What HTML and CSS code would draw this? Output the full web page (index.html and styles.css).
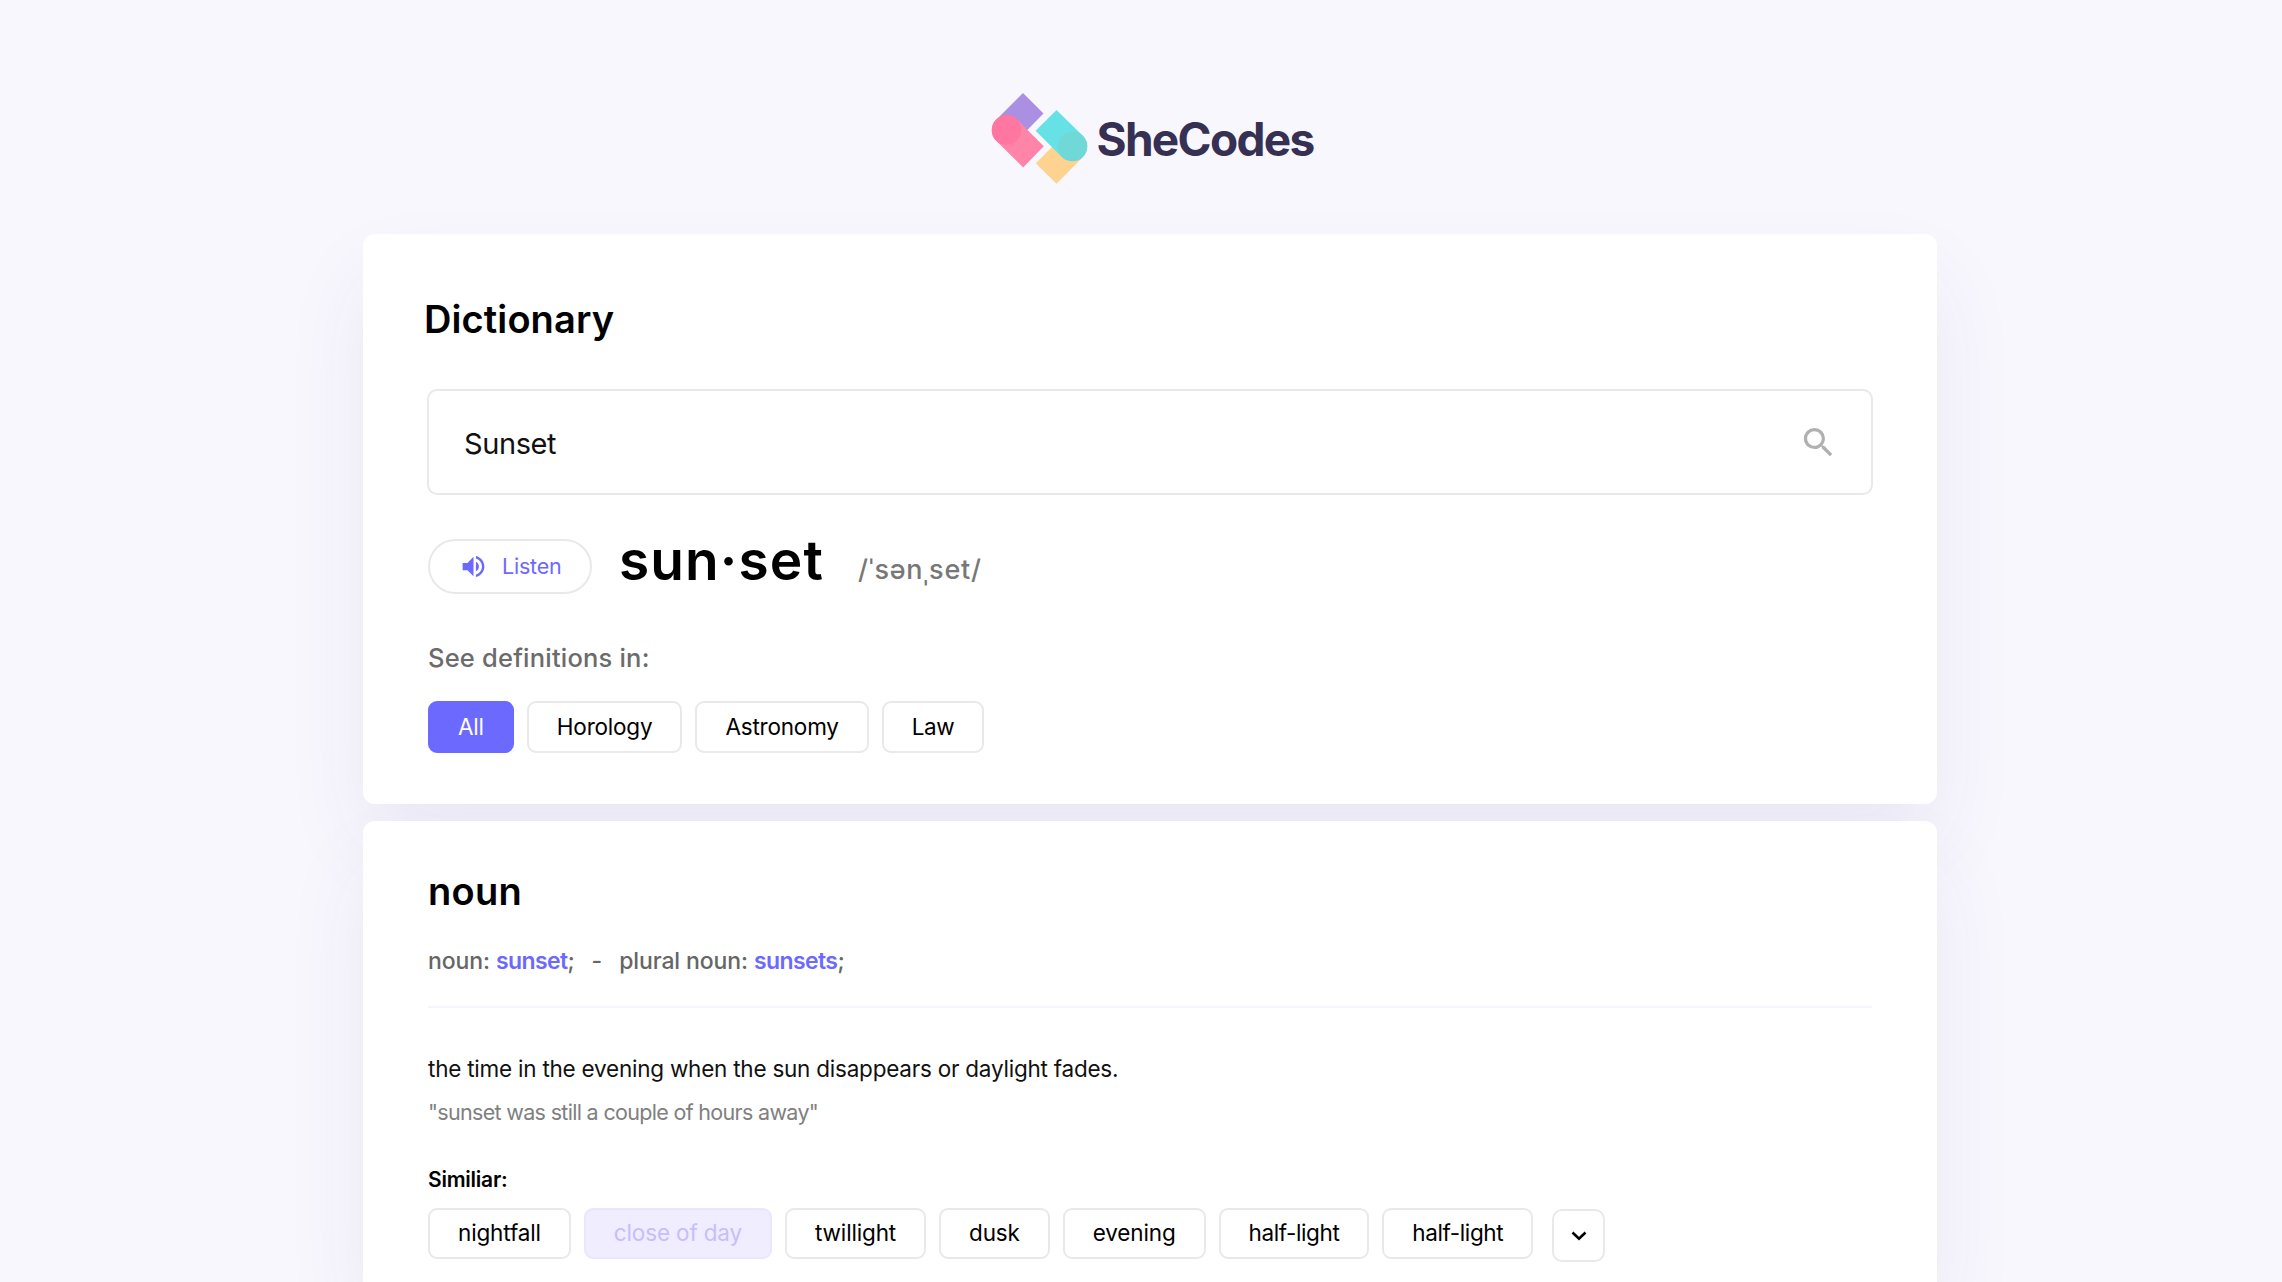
FILE: index.html
```html
<!DOCTYPE html>
<html lang="en">
<head>
<meta charset="utf-8">
<title>SheCodes Dictionary</title>
<link rel="stylesheet" href="styles.css">
</head>
<body>
<header class="header">
  <svg class="logo-mark" viewBox="21 12 97 92" aria-hidden="true">
    <path fill="#aa8fe3" d="M53 13 73.5 33.5 46.9 60.5 26 40Z"/>
    <path fill="#ff85a8" d="M47.1 39.4 73.8 66.2 53.2 87.4 25.9 60.6A15 15 0 0 1 47.1 39.4Z"/>
    <circle fill="#ff76a1" cx="36.5" cy="50" r="14.8"/>
    <path fill="#fed38f" d="M92 57 113 77 86.5 103.7 65.8 83.3Z"/>
    <path fill="#66e1e6" d="M86.5 30 113.1 55.9A15 15 0 0 1 91.9 77.1L65.6 50.8Z"/>
    <circle fill="#71d8d8" cx="102.5" cy="66.5" r="14.8"/>
  </svg>
  <span class="logo-text">SheCodes</span>
</header>

<main class="container">
  <section class="card search-card">
    <h1 class="title">Dictionary</h1>
    <div class="search">
      <span class="search-value">Sunset</span>
      <svg class="search-icon" viewBox="0 0 24 24" fill="currentColor"><path d="M15.5 14h-.79l-.28-.27A6.471 6.471 0 0 0 16 9.5 6.5 6.5 0 1 0 9.5 16c1.61 0 3.09-.59 4.23-1.57l.27.28v.79l5 4.99L20.49 19l-4.99-5zm-6 0C7.01 14 5 11.99 5 9.5S7.01 5 9.5 5 14 7.01 14 9.5 11.99 14 9.5 14z"/></svg>
    </div>
    <div class="word-row">
      <button class="listen">
        <svg class="listen-icon" viewBox="0 0 24 24" fill="currentColor"><path d="M3 9v6h4l5 5V4L7 9H3zm13.5 3c0-1.77-1.02-3.29-2.5-4.03v8.05c1.48-.73 2.5-2.25 2.5-4.02zM14 3.23v2.06c2.89.86 5 3.54 5 6.71s-2.11 5.85-5 6.71v2.06c4.01-.91 7-4.49 7-8.77s-2.99-7.86-7-8.77z"/></svg>
        <span>Listen</span>
      </button>
      <span class="word">sun·set</span>
      <span class="phonetic">/ˈsənˌset/</span>
    </div>
    <p class="see">See definitions in:</p>
    <div class="pills">
      <button class="pill pill-active">All</button>
      <button class="pill">Horology</button>
      <button class="pill">Astronomy</button>
      <button class="pill pill-tight">Law</button>
    </div>
  </section>

  <section class="card meaning-card">
    <h2 class="part">noun</h2>
    <p class="forms"><span>noun: <b class="form">sunset</b>;</span><span class="dash">-</span><span>plural noun: <b class="form">sunsets</b>;</span></p>
    <hr class="divider">
    <p class="definition">the time in the evening when the sun disappears or daylight fades.</p>
    <p class="example">"sunset was still a couple of hours away"</p>
    <h3 class="similar">Similiar:</h3>
    <div class="pills synonyms">
      <button class="pill">nightfall</button>
      <button class="pill pill-muted">close of day</button>
      <button class="pill">twillight</button>
      <button class="pill">dusk</button>
      <button class="pill">evening</button>
      <button class="pill pill-tight">half-light</button>
      <button class="pill pill-tight">half-light</button>
      <button class="more" aria-label="More"><svg class="more-icon" viewBox="0 0 16 10"><path d="M1.5 1.5 8 7.8l6.5-6.3" fill="none" stroke="#000" stroke-width="2.6"/></svg></button>
    </div>
  </section>
</main>
</body>
</html>
```
FILE: styles.css
```css
* { box-sizing: border-box; margin: 0; padding: 0; }

body {
  height: 1282px;
  overflow: hidden;
  background: #f8f7fe;
  color: #000;
  font-family: Inter, "Liberation Sans", sans-serif;
}

button { font: inherit; letter-spacing: inherit; background: #fff; }

.header {
  display: flex;
  justify-content: center;
  height: 234px;
  padding: 92px 0 0 22px;
}
.logo-mark { width: 97px; height: 92px; }
.logo-text {
  margin: 19px 0 0 9px;
  color: #363053;
  font-size: 46px;
  font-weight: 700;
  line-height: 56px;
  letter-spacing: -1.7px;
}

.container {
  display: flex;
  flex-direction: column;
  gap: 17px;
  width: 1574px;
  margin-left: 363px;
  position: relative;
  z-index: 0;
}
.card {
  position: relative;
  border-radius: 12px;
  background: #fff;
}
/* Shadows sit behind both cards so neither darkens its neighbour. */
.card::before {
  content: "";
  position: absolute;
  inset: 0;
  z-index: -1;
  border-radius: inherit;
  box-shadow: 0 43px 87px rgba(59, 47, 120, 0.07);
}
.search-card { padding: 61px 65px 51px; }
.meaning-card { height: 461px; padding: 46px 65px 0; border-radius: 12px 12px 0 0; }

.title {
  margin-left: -4px;
  font-size: 38px;
  font-weight: 600;
  line-height: 48px;
  letter-spacing: 0.1px;
}
.search {
  display: flex;
  align-items: center;
  justify-content: space-between;
  height: 106px;
  margin: 46px -1px 0 -1px;
  padding: 0 33px 0 35px;
  border: 2px solid #e9e9e9;
  border-radius: 10px;
}
.search-value {
  padding-top: 2px;
  color: #111;
  font-size: 29px;
  letter-spacing: -0.4px;
}
.search-icon { width: 39px; height: 39px; color: #b0b0b0; }

.word-row { display: flex; align-items: flex-start; height: 64px; margin-top: 35px; }
.listen {
  display: flex;
  align-items: center;
  gap: 14px;
  width: 164px;
  height: 55px;
  margin-top: 9px;
  padding-left: 29px;
  border: 2px solid #e9e9e9;
  border-radius: 28px;
  color: #6c69ff;
  font-size: 21.5px;
  line-height: 26px;
  letter-spacing: -0.21px;
}
.listen span { padding-bottom: 2px; }
.listen-icon { width: 29px; height: 29px; }
.word {
  margin-left: 27px;
  font-size: 55px;
  font-weight: 600;
  line-height: 60px;
  letter-spacing: 1.1px;
}
.phonetic {
  margin: 22px 0 0 34px;
  color: #777;
  font-size: 27px;
  font-weight: 500;
  line-height: 36px;
  letter-spacing: 0.76px;
}
.see {
  margin-top: 48px;
  color: #6b6b6b;
  font-size: 25.5px;
  font-weight: 500;
  line-height: 32px;
  letter-spacing: 0.2px;
}

.pills { display: flex; gap: 13px; margin-top: 27px; letter-spacing: -0.2px; }
.pill {
  height: 52px;
  padding: 0 28px 2px;
  border: 2px solid #e9e9e9;
  border-radius: 9px;
  font-size: 22.5px;
}
.pill-tight { letter-spacing: -0.4px; }
.pill-active { border-color: #6c69ff; background: #6c69ff; color: #fff; }
.pill-muted { border-color: #e9e7ff; background: #efedff; color: #c5bfff; }

.part {
  font-size: 38px;
  font-weight: 600;
  line-height: 48px;
  letter-spacing: 0.3px;
}
.forms {
  display: flex;
  margin-top: 31px;
  color: #666;
  font-size: 23px;
  font-weight: 500;
  line-height: 30px;
  letter-spacing: -0.1px;
}
.form { color: #6c69ff; font-weight: 600; letter-spacing: -0.6px; }
.dash { margin: 0 17px; }
.divider { height: 2px; margin: 30px 0 0; border: 0; background: #f5f4ff; }
.definition {
  margin-top: 46px;
  color: #111;
  font-size: 22.5px;
  line-height: 30px;
  letter-spacing: -0.23px;
}
.example {
  margin-top: 13px;
  color: #808080;
  font-size: 21.5px;
  line-height: 30px;
  letter-spacing: -0.68px;
}
.similar {
  margin-top: 40px;
  font-size: 21px;
  font-weight: 600;
  line-height: 26px;
  letter-spacing: -0.24px;
}
.synonyms { margin-top: 15px; letter-spacing: -0.15px; }
.synonyms .pill { height: 51px; }
.more {
  display: grid;
  place-items: center;
  width: 53px;
  height: 53px;
  margin: 1px 0 0 6px;
  border: 2px solid #e9e9e9;
  border-radius: 10px;
}
.more-icon { width: 16px; height: 10px; }
```
